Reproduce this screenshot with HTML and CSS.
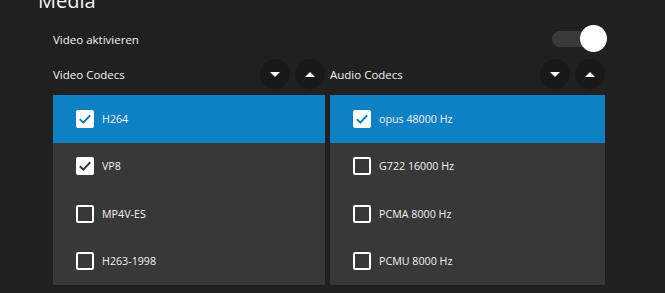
FILE: index.html
```html
<!DOCTYPE html>
<html lang="de">
<head>
  <meta charset="UTF-8" />
  <title>Media</title>
  <link rel="stylesheet" href="styles.css">
</head>
<body>
  <div class="section">
    <div class="section-title">Media</div>
    <div class="content">
      <div class="toggle-row">
        <div class="label">Video aktivieren</div>
        <div class="toggle on"><div class="knob"></div></div>
      </div>

      <div class="codecs">
        <div class="codec-col video">
          <div class="codec-header">
            <div class="label">Video Codecs</div>
            <div class="sort-buttons">
              <button class="round-btn"><span class="tri down"></span></button>
              <button class="round-btn"><span class="tri up"></span></button>
            </div>
          </div>
          <div class="codec-list">
            <div class="codec-item selected">
              <svg class="check" width="18" height="18" viewBox="0 0 18 18"><rect x="0" y="0" width="18" height="18" rx="2" fill="#fff"/><path d="M3.8 9.2 L7.3 12.6 L14.2 5.2" fill="none" stroke="currentColor" stroke-width="2"/></svg>
              <span>H264</span>
            </div>
            <div class="codec-item">
              <svg class="check" width="18" height="18" viewBox="0 0 18 18"><rect x="0" y="0" width="18" height="18" rx="2" fill="#fff"/><path d="M3.8 9.2 L7.3 12.6 L14.2 5.2" fill="none" stroke="currentColor" stroke-width="2"/></svg>
              <span>VP8</span>
            </div>
            <div class="codec-item">
              <span class="box"></span>
              <span>MP4V-ES</span>
            </div>
            <div class="codec-item">
              <span class="box"></span>
              <span>H263-1998</span>
            </div>
          </div>
        </div>

        <div class="codec-col audio">
          <div class="codec-header">
            <div class="label">Audio Codecs</div>
            <div class="sort-buttons">
              <button class="round-btn"><span class="tri down"></span></button>
              <button class="round-btn"><span class="tri up"></span></button>
            </div>
          </div>
          <div class="codec-list">
            <div class="codec-item selected">
              <svg class="check" width="18" height="18" viewBox="0 0 18 18"><rect x="0" y="0" width="18" height="18" rx="2" fill="#fff"/><path d="M3.8 9.2 L7.3 12.6 L14.2 5.2" fill="none" stroke="currentColor" stroke-width="2"/></svg>
              <span>opus 48000 Hz</span>
            </div>
            <div class="codec-item">
              <span class="box"></span>
              <span>G722 16000 Hz</span>
            </div>
            <div class="codec-item">
              <span class="box"></span>
              <span>PCMA 8000 Hz</span>
            </div>
            <div class="codec-item">
              <span class="box"></span>
              <span>PCMU 8000 Hz</span>
            </div>
          </div>
        </div>
      </div>
    </div>
  </div>
</body>
</html>
```

FILE: styles.css
```css
html, body {
  margin: 0;
  padding: 0;
  background-color: #202020;
  font-family: 'Open Sans', 'Noto Sans', sans-serif;
  color: #f2f2f2;
  overflow: hidden;
}
.section {
  padding-left: 38px;
}
.section-title {
  font-size: 20px;
  line-height: 24px;
  margin-top: -11px;
  color: #f5f5f5;
}
.content {
  padding-left: 15px;
  width: 554px;
}
.label {
  font-size: 11.5px;
  color: #f2f2f2;
}
.toggle-row {
  display: flex;
  justify-content: space-between;
  align-items: center;
  height: 28px;
  margin-top: 12px;
}
.toggle {
  position: relative;
  width: 55px;
  height: 28px;
}
.toggle::before {
  content: '';
  position: absolute;
  left: 0;
  top: 6px;
  width: 48px;
  height: 16px;
  border-radius: 8px;
  background-color: #3a3a3a;
}
.knob {
  position: absolute;
  right: 0;
  top: 0;
  width: 27px;
  height: 27px;
  border-radius: 50%;
  background-color: #fff;
}
.codecs {
  display: flex;
  gap: 5px;
  margin-top: 6px;
}
.codec-col.video {
  width: 272px;
}
.codec-col.audio {
  width: 275px;
}
.codec-header {
  display: flex;
  justify-content: space-between;
  align-items: center;
  height: 30px;
  margin-bottom: 6px;
}
.sort-buttons {
  display: flex;
  gap: 5px;
}
.round-btn {
  width: 30px;
  height: 30px;
  border: none;
  padding: 0;
  border-radius: 50%;
  background-color: #191919;
  display: flex;
  justify-content: center;
  align-items: center;
}
.tri {
  width: 0;
  height: 0;
  border-left: 5px solid transparent;
  border-right: 5px solid transparent;
}
.tri.down {
  border-top: 5px solid #fff;
}
.tri.up {
  border-bottom: 5px solid #fff;
}
.codec-list {
  display: flex;
  flex-direction: column;
  height: 190px;
  background-color: #383838;
}
.codec-item {
  flex: 1;
  display: flex;
  align-items: center;
  gap: 8px;
  padding-left: 23px;
  font-size: 10.7px;
  color: #383838;
}
.codec-item span {
  color: #f2f2f2;
}
.codec-item.selected {
  background-color: #0e80c4;
  color: #0e80c4;
}
.check {
  display: block;
  flex-shrink: 0;
}
.box {
  width: 14px;
  height: 14px;
  border: 2px solid #fff;
  border-radius: 2px;
  flex-shrink: 0;
}
```
